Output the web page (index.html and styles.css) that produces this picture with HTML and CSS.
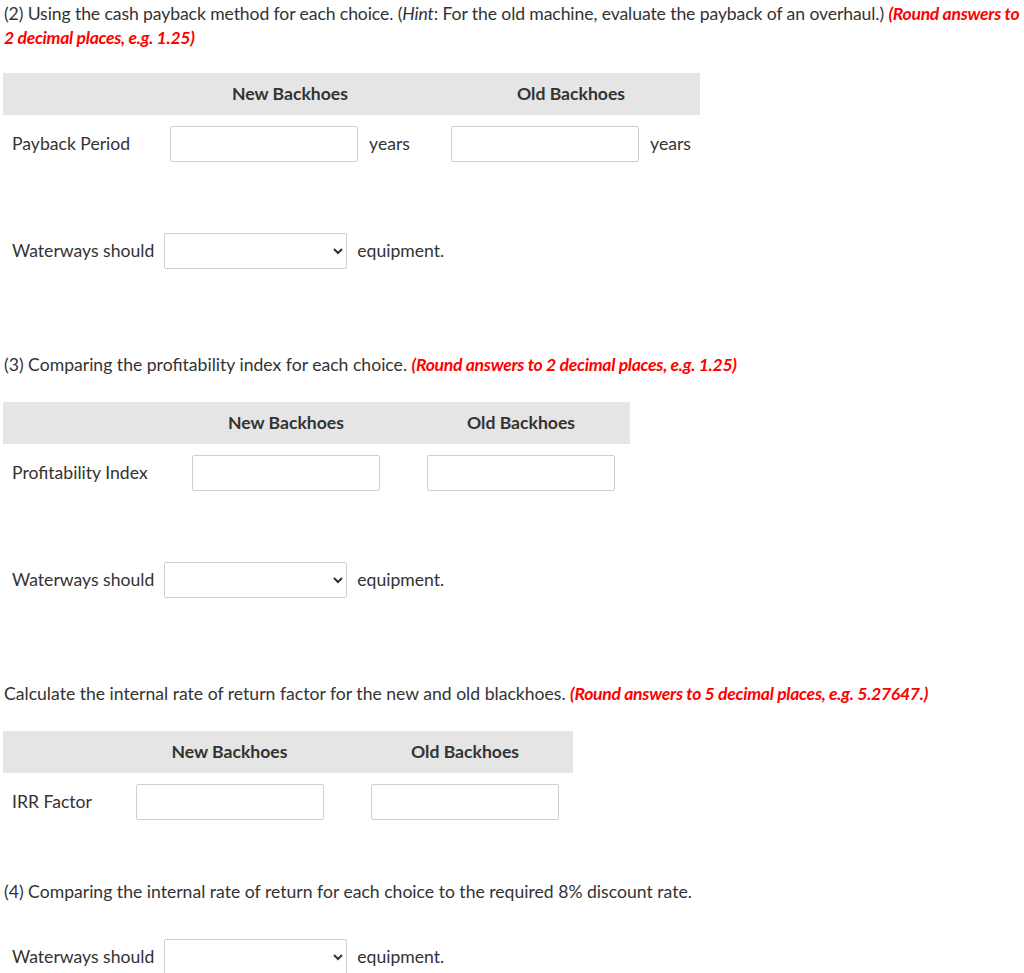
FILE: index.html
```html
<!DOCTYPE html>
<html lang="en">
<head>
<meta charset="utf-8">
<title>Backhoes</title>
<link rel="stylesheet" href="styles.css">
</head>
<body>
<div class="page">
  <p class="q q1">(2) Using the cash payback method for each choice. (<i>Hint</i>: For the old machine, evaluate the payback of an overhaul.) <b class="red">(Round answers to 2 decimal places, e.g. 1.25)</b></p>

  <div class="grid t1">
    <div class="th"></div>
    <div class="th">New Backhoes</div>
    <div class="th">Old Backhoes</div>
    <div class="td label">Payback Period</div>
    <div class="td cell"><input class="box" type="text"><span class="unit">years</span></div>
    <div class="td cell"><input class="box" type="text"><span class="unit">years</span></div>
  </div>

  <div class="should s1"><span>Waterways should</span><select class="sel"><option></option></select><span>equipment.</span></div>

  <p class="q q3">(3) Comparing the profitability index for each choice. <b class="red">(Round answers to 2 decimal places, e.g. 1.25)</b></p>

  <div class="grid t2">
    <div class="th"></div>
    <div class="th">New Backhoes</div>
    <div class="th">Old Backhoes</div>
    <div class="td label">Profitability Index</div>
    <div class="td cell"><input class="box" type="text"></div>
    <div class="td cell"><input class="box" type="text"></div>
  </div>

  <div class="should s2"><span>Waterways should</span><select class="sel"><option></option></select><span>equipment.</span></div>

  <p class="q q5">Calculate the internal rate of return factor for the new and old blackhoes. <b class="red">(Round answers to 5 decimal places, e.g. 5.27647.)</b></p>

  <div class="grid t3">
    <div class="th"></div>
    <div class="th">New Backhoes</div>
    <div class="th">Old Backhoes</div>
    <div class="td label">IRR Factor</div>
    <div class="td cell"><input class="box" type="text"></div>
    <div class="td cell"><input class="box" type="text"></div>
  </div>

  <p class="q q4">(4) Comparing the internal rate of return for each choice to the required 8% discount rate.</p>

  <div class="should s3"><span>Waterways should</span><select class="sel"><option></option></select><span>equipment.</span></div>
</div>
</body>
</html>
```
FILE: styles.css
```css
html, body {
  margin: 0;
  padding: 0;
  background: #ffffff;
}
body {
  font-family: Lato, "Open Sans", "Liberation Sans", sans-serif;
  font-size: 17.6px;
  line-height: 24px;
  color: #333333;
}
.page {
  padding: 2px 4px 0 4px;
}
.q {
  margin: 0;
}
.q1 {
  letter-spacing: -0.1px;
}
.red {
  color: #ff0000;
  font-weight: 700;
  font-style: italic;
  letter-spacing: -0.3px;
}
.grid {
  display: grid;
  margin-left: -1px;
}
.t1 { grid-template-columns: 135px 304px 258px; margin-top: 23px; }
.t2 { grid-template-columns: 157px 252px 218px; margin-top: 25px; }
.t3 { grid-template-columns: 99px 255px 216px; margin-top: 25px; }
.th {
  background: #e5e5e5;
  height: 42px;
  display: flex;
  align-items: center;
  justify-content: center;
  font-weight: 700;
  margin-bottom: 11px;
}
.td {
  height: 36px;
  display: flex;
  align-items: center;
}
.label {
  padding-left: 9px;
}
.cell {
  justify-content: center;
  gap: 11px;
}
.box {
  box-sizing: border-box;
  width: 188px;
  height: 36px;
  border: 1px solid #cfcfcf;
  border-radius: 2px;
  background: #fff;
  margin: 0;
  padding: 0 8px;
  font: inherit;
}
.unit {
  line-height: 24px;
}
.should {
  display: flex;
  align-items: center;
  gap: 10px;
  padding-left: 8px;
  height: 36px;
}
.sel {
  box-sizing: border-box;
  width: 183px;
  height: 36px;
  border: 1px solid #cfcfcf;
  border-radius: 2px;
  background: #fff;
  margin: 0;
  font: inherit;
  color: #333;
}
.s1 { margin-top: 71px; }
.q3 { margin-top: 84px; }
.s2 { margin-top: 71px; }
.q5 { margin-top: 84px; }
.q4 { margin-top: 60px; }
.s3 { margin-top: 35px; }
```
